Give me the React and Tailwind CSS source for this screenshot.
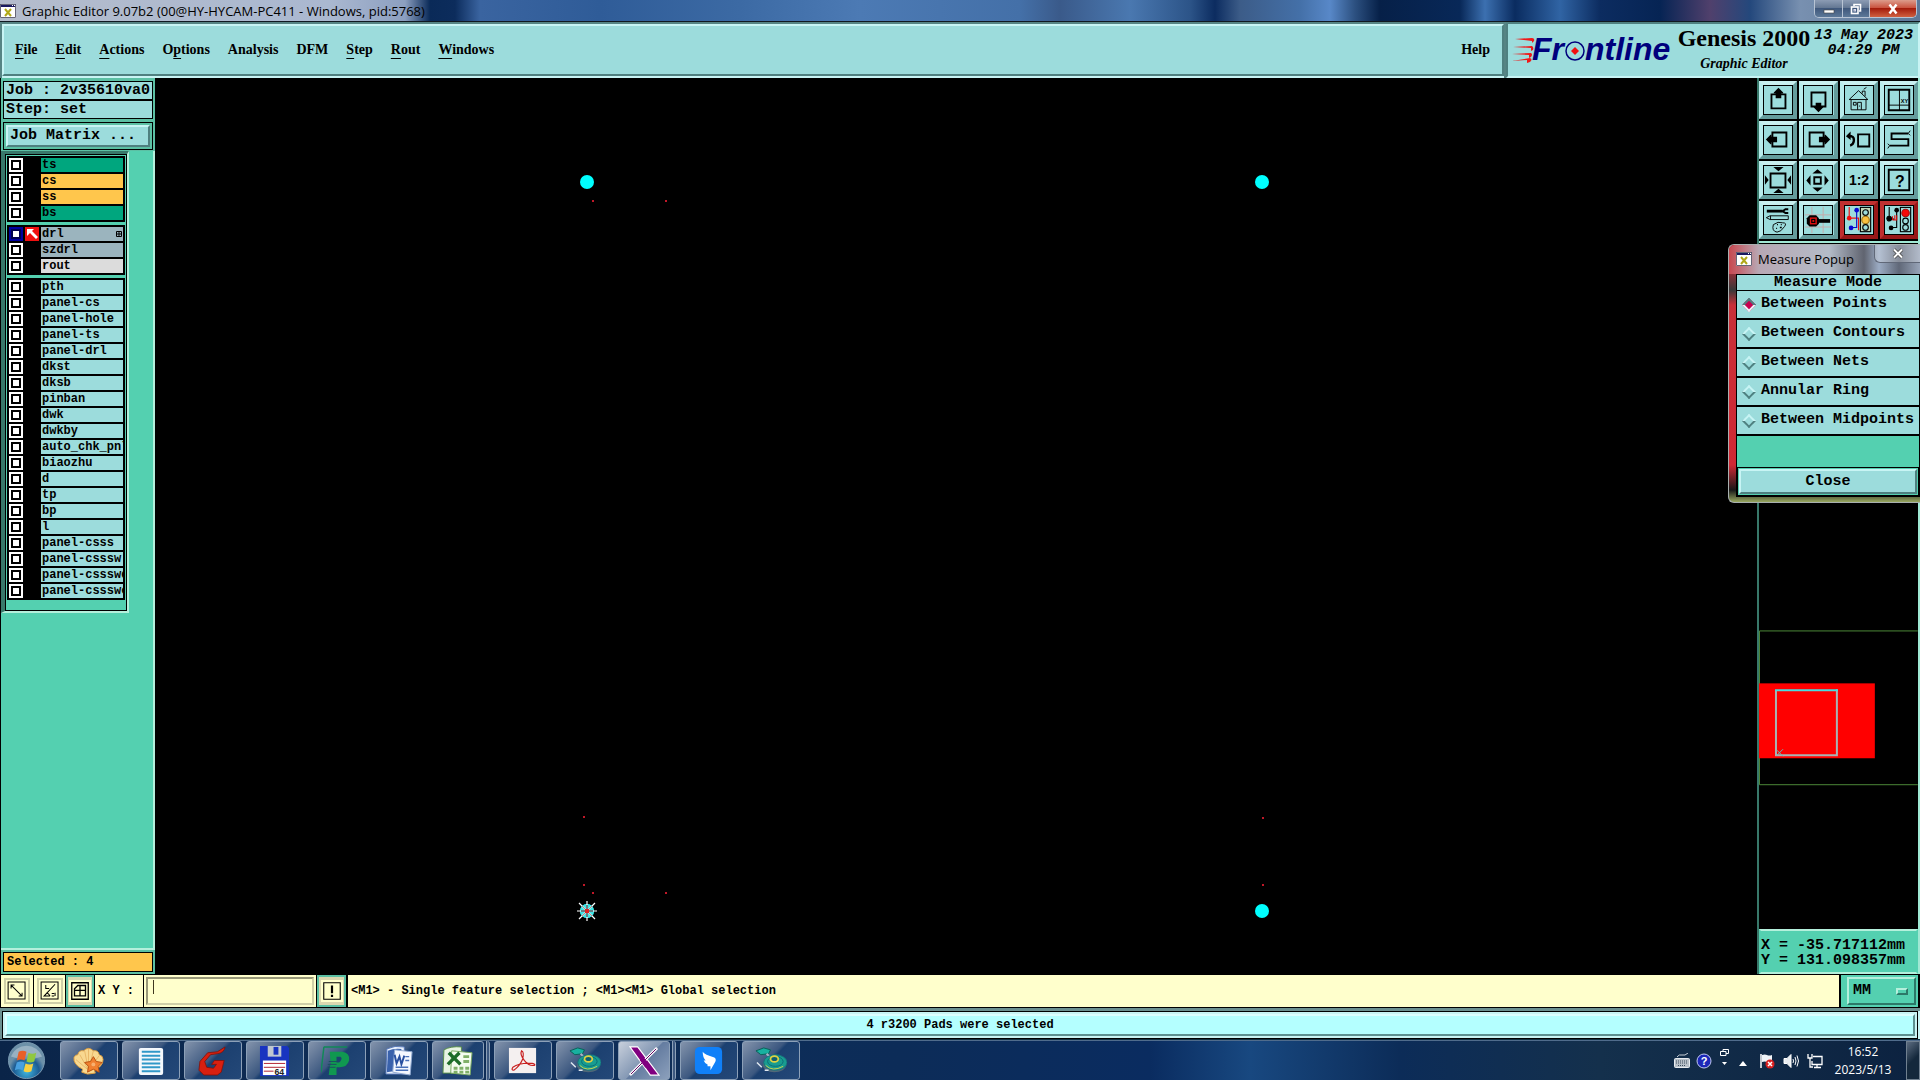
import React from "react";

const MONO = "font-['Liberation_Mono','DejaVu_Sans_Mono',monospace] font-bold";
const SERIF = "font-['Liberation_Serif',serif] font-bold";
const UI = "font-['Open_Sans','Noto_Sans',sans-serif]";
const RAISED = "border-t-[#c8f4f4] border-l-[#c8f4f4] border-b-[#4f8080] border-r-[#4f8080]";

const menus = [
  ["", "F", "ile"],
  ["", "E", "dit"],
  ["", "A", "ctions"],
  ["O", "p", "tions"],
  ["Analysis", "", ""],
  ["DFM", "", ""],
  ["", "S", "tep"],
  ["", "R", "out"],
  ["", "W", "indows"],
];

const layerGroups = [
  [
    { name: "ts", color: "bg-[#00a67e]" },
    { name: "cs", color: "bg-[#ffc64c]" },
    { name: "ss", color: "bg-[#ffc64c]" },
    { name: "bs", color: "bg-[#00a67e]" },
  ],
  [
    { name: "drl", color: "bg-[#9bb4be]", active: true },
    { name: "szdrl", color: "bg-[#9bb4be]" },
    { name: "rout", color: "bg-[#dcdcdc]" },
  ],
  [
    "pth", "panel-cs", "panel-hole", "panel-ts", "panel-drl", "dkst", "dksb", "pinban", "dwk", "dwkby",
    "auto_chk_pnl", "biaozhu", "d", "tp", "bp", "l", "panel-csss", "panel-csssw", "panel-cssswd", "panel-cssswc",
  ].map((name) => ({ name, color: "bg-[#9cdcdc]" })),
];

function AppIcon({ className = "w-4 h-[14px]" }) {
  return (
    <svg viewBox="0 0 16 14" className={className} aria-hidden="true">
      <rect width="16" height="14" fill="#fff" />
      <rect width="16" height="3" fill="#1a1a60" />
      <path d="M12 1h1v1h-1zM14 1h1v1h-1z" fill="#fff" />
      <path d="M.5 .5h15v13H.5z" fill="none" stroke="#667" />
      <path d="M5 5l6 7M11 5l-6 7" stroke="#b0a818" strokeWidth="2" />
    </svg>
  );
}

function TitleBar() {
  return (
    <div className="flex h-[22px] shrink-0 items-start justify-between border-b border-[#101820] bg-[linear-gradient(90deg,#b4bccc_0,#aab8d0_330px,#8c9fc0_405px,#0a2a58_430px,#0c2c5c_455px,#3a64a0_480px,#2f5c98_600px,#3c6aa4_740px,#4c7ab4_860px,#4470a8_1020px,#3a5a8a_1060px,#4a78b0_1130px,#2c5488_1190px,#0c2c60_1215px,#3c5c88_1240px,#4470a8_1300px,#5888c8_1330px,#2c5080_1355px,#062048_1380px,#082858_1460px,#3c70b0_1485px,#0a2c60_1515px,#3064a4_1560px,#0c2c60_1600px,#062454_1660px,#50406c_1710px,#24487c_1750px,#7890b0_1800px,#5c7898_100%)]">
      <div className="flex h-[21px] items-center gap-1.5">
        <AppIcon />
        <h1 className={`${UI} text-[13px] leading-[20px] text-black`}>Graphic Editor 9.07b2 (00@HY-HYCAM-PC411 - Windows, pid:5768)</h1>
      </div>
      <div className="mr-[3px] flex h-[18px] overflow-hidden rounded-b-[5px] border border-t-0 border-[#b8c4d4]">
        <button aria-label="Minimize" className="flex w-7 items-center justify-center border-r border-[#b8c4d4] bg-[linear-gradient(#8c9cb4,#607490_50%,#40587c_50%,#5c7898)]">
          <svg viewBox="0 0 12 12" className="h-3 w-3"><rect x="1" y="7" width="10" height="3" fill="#fff" stroke="#444" strokeWidth=".6" /></svg>
        </button>
        <button aria-label="Restore" className="flex w-[27px] items-center justify-center border-r border-[#b8c4d4] bg-[linear-gradient(#8c9cb4,#607490_50%,#40587c_50%,#5c7898)]">
          <svg viewBox="0 0 12 12" className="h-3 w-3" fill="none" stroke="#fff" strokeWidth="1.6"><path d="M4 3V1.5h6.500V8H9" /><rect x="1.500" y="4" width="6.500" height="6.500" /><rect x="4" y="6.500" width="1.500" height="1.500" strokeWidth="1" stroke="#dde" /></svg>
        </button>
        <button aria-label="Close window" className="flex w-[46px] items-center justify-center bg-[linear-gradient(#dc9c8c,#c84c38_50%,#a41c0c_50%,#d06040)]">
          <svg viewBox="0 0 12 12" className="h-3 w-3" stroke="#fff" strokeWidth="2.500"><path d="M2.500 1.500l7 9M9.500 1.500l-7 9" /></svg>
        </button>
      </div>
    </div>
  );
}

function FrontlineLogo() {
  return (
    <svg viewBox="0 -6 162 42" className="h-[42px] w-[162px] shrink-0" role="img" aria-label="Frontline">
      <g fill="#f01818">
        <path d="M3 4l17-1q3 0 2 3l-2 2v-2zM1 12l19-1q2 1 1 4l-2 1v-3zM0 19l19-1q2 1 0 4l-2 1v-3zM0 26l18-3q3 1 0 4l-3 1v-3z" />
      </g>
      <g fill="#00007c" fontFamily="'Liberation Sans',sans-serif" fontWeight="700" fontStyle="italic" fontSize="32">
        <text x="20" y="25">Fr</text>
        <text x="73" y="25">ntline</text>
      </g>
      <circle cx="63" cy="16" r="9" fill="#9cdcdc" stroke="#00007c" strokeWidth="1.500" />
      <path d="M63 12l4 4-4 4-4-4z" fill="#f01010" />
    </svg>
  );
}

function MenuBar() {
  return (
    <header className="flex h-14 shrink-0 bg-[#568484] text-black">
      <div className="flex flex-1 flex-col pl-0.5 pt-0.5">
        <nav className={`${SERIF} flex flex-1 items-center border-2 ${RAISED} bg-[#9cdcdc] pl-[11px] pr-3 text-[14px] leading-[18px]`}>
          <div className="flex flex-1 gap-[18px]">
            {menus.map(([a, u, b]) => (
              <button key={a + u + b}>
                {a}
                {u && <span className="underline underline-offset-4">{u}</span>}
                {b}
              </button>
            ))}
          </div>
          <button>Help</button>
        </nav>
        <div className="h-0.5 bg-[#c8f4f4]" />
      </div>
      <div className="ml-0.5 flex w-[414px] items-start border-2 border-t-[#4f8080] border-l-[#4f8080] border-b-[#c8f4f4] border-r-[#c8f4f4] bg-[#9cdcdc]">
        <div className="pl-1 pt-[5px]"><FrontlineLogo /></div>
        <div className={`${SERIF} flex w-[140px] shrink-0 flex-col items-center whitespace-nowrap`}>
          <div className="text-[24px] leading-[29px]">Genesis 2000</div>
          <div className="text-[14px] italic leading-[22px]">Graphic Editor</div>
        </div>
        <time className={`${MONO} whitespace-nowrap pt-1 text-center text-[15px] italic leading-[15px]`}>
          13 May 2023
          <br />
          04:29 PM
        </time>
      </div>
    </header>
  );
}

function Layer({ name, color, active }) {
  return (
    <li className="flex h-4 items-center gap-0.5 px-0.5">
      <label className={`flex size-[14px] shrink-0 items-center justify-center ${active ? "bg-[#0000a0]" : "bg-white"}`}>
        <input
          type="checkbox"
          aria-label={`Display ${name}`}
          className={`size-[10px] appearance-none border-2 bg-white ${active ? "border-[#000050]" : "border-black"}`}
        />
      </label>
      <span className="size-[14px] shrink-0">
        {active && (
          <svg viewBox="0 0 14 14" className="size-[14px] bg-[#f01010]"><path d="M2 2h7L7 4l6 6-2 2-6-6-3 3z" fill="#fff" /></svg>
        )}
      </span>
      <button className={`${MONO} ${color} flex h-[14px] min-w-0 flex-1 items-center justify-between overflow-hidden pl-px text-left text-[12px] leading-[14px] whitespace-nowrap text-black`}>
        {name}
        {active && (
          <svg viewBox="0 0 6 6" className="mr-px size-1.5" fill="none" stroke="#000"><path d="M.5 .5h5v5h-5zM3 0v6M0 3h6" /></svg>
        )}
      </button>
    </li>
  );
}

function Sidebar() {
  return (
    <aside className="ml-px flex w-[154px] shrink-0 flex-col bg-[#5cc0a4] pt-[3px] text-black">
      <div className={`${MONO} mx-0.5 text-[15px] leading-[17px]`}>
        <div className="border border-black bg-[#9cdcdc] pl-0.5">Job : 2v35610va0</div>
        <div className="border border-black bg-[#9cdcdc] pl-0.5">Step: set</div>
        <div className="mt-[3px] border border-black p-0.5">
          <button className={`h-[22px] w-full border-2 ${RAISED} bg-[#9cdcdc] pl-0.5 text-left leading-[18px]`}>Job Matrix ...</button>
        </div>
      </div>
      <div className="mt-px flex flex-1 items-start border-r-2 border-b-2 border-r-[#b4f0dc] border-b-[#b4f0dc] bg-[#54d0b0]">
        <div className="border-t-[3px] border-l-4 border-r-2 border-b-2 border-t-[#38786a] border-l-[#38786a] border-r-[#b4f0dc] border-b-[#b4f0dc]">
          <div className="w-[122px] space-y-[3px] border border-black px-px pt-px pb-[10px]">
            {layerGroups.map((g, i) => (
              <ul key={i} className="bg-black py-px">
                {g.map((l) => (
                  <Layer key={l.name} {...l} />
                ))}
              </ul>
            ))}
          </div>
        </div>
      </div>
      <div className={`${MONO} mx-0.5 mt-0.5 mb-0.5 border border-black bg-[#ffc64c] pl-[3px] text-[12px] leading-[18px]`}>Selected : 4</div>
    </aside>
  );
}

const pads = [[432, 104], [1107, 104], [1107, 833], [432, 833]];
const marks = [[437, 122], [510, 122], [428, 738], [1107, 739], [428, 806], [437, 814], [510, 814], [1107, 806]];

function Canvas() {
  return (
    <main className="min-w-0 flex-1 bg-black">
      <svg viewBox="0 0 1602 896" className="h-full w-full" role="img" aria-label="Board view">
        {pads.map(([x, y]) => <circle key={`${x}-${y}`} cx={x} cy={y} r="7" fill="#00ffff" />)}
        {marks.map(([x, y]) => <rect key={`${x}-${y}`} x={x} y={y} width="2" height="2" fill="#c01828" />)}
        <g transform="translate(432 833)">
          <circle r="7" fill="#40e4e4" />
          <path d="M-10 0H10M0-10V10M-8-8L8 8M-8 8L8-8" stroke="#fff" strokeWidth="1.200" />
          <path d="M-6 0H6M0-6V6" stroke="#505860" strokeWidth="1.500" />
          <path d="M-5-5L5 5M-5 5L5-5" stroke="#d08080" />
          <rect x="-2" y="-2" width="4" height="4" fill="#e02020" />
        </g>
      </svg>
    </main>
  );
}

const glyph = { fontFamily: "'Liberation Sans',sans-serif", fontWeight: 700, fill: "#000", stroke: "none" };

const tools = [
  ["Pan up", <g key="i"><path d="M8 9h15v15H8z" /><path d="M15.500 2l5 5v1h-2v5h-6V8h-2V7z" fill="#000" strokeWidth="0" /></g>],
  ["Pan down", <g key="i"><path d="M8 7h15v15H8z" /><path d="M15.500 28l5-5v-1h-2v-4h-6v4h-2v1z" fill="#000" strokeWidth="0" /></g>],
  ["Home", <g key="i" strokeWidth="1"><path d="M4.500 14.500L14.500 5l10 9.500zM6.500 14.500v11h16v-11M13.500 25.500v-8h4v8M9 17.500h3v3H9zM18.500 8V5.500h3V11M20 3.500l3-2M15.500 21v1" /></g>],
  ["Snap view", <g key="i"><path d="M4 4h22v22H4z" /><path d="M15.500 4v22M4 20.500h22" strokeWidth="1" /><text x="17" y="18" {...glyph} fontSize="6">XY</text></g>],
  ["Pan left", <g key="i"><path d="M9 7h15v15H9z" /><path d="M2 14.500l5-5h1v2h6v6H8v2H7z" fill="#000" strokeWidth="0" /></g>],
  ["Pan right", <g key="i"><path d="M6 7h15v15H6z" /><path d="M28 14.500l-5-5h-1v2h-6v6h6v2h1z" fill="#000" strokeWidth="0" /></g>],
  ["Previous view", <g key="i"><path d="M14 9h12v13H14z" /><path d="M4 11h3q3 1 2.500 5t-4 5" strokeWidth="2.500" /><path d="M1 11l5-5v9z" fill="#000" strokeWidth="0" /></g>],
  ["Serpentine", <g key="i"><path d="M25 8H7v6h18v7H5" /><path d="M25 8l2-3M25 8l2 2M5 21l-2-2M5 21l-2 3" strokeWidth="1" /></g>],
  ["Zoom in", <g key="i"><path d="M7 8h16v15H7z" /><path d="M10 1h11l-5.500 4.500zM10 29h11l-5.500-4.500zM1 10v10l4-5zM29 10v10l-4-5z" fill="#000" strokeWidth="0" /></g>],
  ["Zoom out", <g key="i"><path d="M11 12h7v7h-7z" /><path d="M9 8h11l-5.500-4.500zM9 23h11l-5.500 4.500zM7 10v11l-4.500-5.500zM22 10v11l4.500-5.500z" fill="#000" strokeWidth="0" /></g>],
  ["Scale one to two", <text key="i" x="15" y="20" {...glyph} fontSize="15" textAnchor="middle">1:2</text>],
  ["Query", <g key="i"><path d="M4 4h22v22H4z" /><text x="16" y="22" {...glyph} fontSize="17" textAnchor="middle">?</text></g>],
  ["Options", <g key="i" strokeWidth="1"><path d="M3 5.500h17" strokeWidth="3" /><path d="M26 3.500h-3l-3 2 3 2h3" strokeWidth="2" /><path d="M2.500 12.500l4-2H26v4H6.500zM7 10.500v4" /><path d="M10 20q5-4 10-2 5 0 2 4-4 6-8 6-6-1-4-8z" /><path d="M14 20h1M18 20h1M13 24h1M17 23h2" strokeWidth="1.500" /></g>],
  ["Control", <g key="i"><path d="M8.500 1v28M20.500 1v28M1 9.500h28M1 22.500h28" stroke="#c8a8a8" strokeWidth="1" /><path d="M13 16h15" strokeWidth="4" /><path d="M6 10h7l3 3v6l-3 3H6l-3-3v-6z" fill="#000" strokeWidth="0" /><rect x="7" y="13" width="6" height="6" stroke="#e01010" strokeWidth="1.500" /><rect x="9" y="15" width="2" height="2" fill="#e01010" stroke="none" /></g>],
  ["Highlight nets", <g key="i" strokeWidth="1.200"><path d="M4.500 1v12h10v13" stroke="#f01010" /><path d="M12.500 4v19H6" stroke="#0808d0" /><circle cx="4.500" cy="13" r="2.500" fill="#f01010" stroke="none" /><circle cx="12.500" cy="4.500" r="2.500" fill="#0808d0" stroke="none" /><circle cx="6.500" cy="23.500" r="2.500" fill="#0808d0" stroke="none" /><rect x="16.500" y="1.500" width="11" height="26" fill="#c4d8b8" /><circle cx="22" cy="7" r="3" fill="#9cdcdc" /><circle cx="22" cy="15" r="4" fill="#f8c040" stroke="#a07010" /><circle cx="22" cy="23" r="3" fill="#9cdcdc" /></g>, true],
  ["Stop nets", <g key="i" strokeWidth="1.200"><path d="M4.500 1v12M12.500 4v19H6M4 14h6" /><path d="M8 11v4M10.500 10v5M8 15h5M12.500 10v5" stroke="#e01010" /><circle cx="4.500" cy="13.500" r="2.500" fill="#000" /><circle cx="12.500" cy="4.500" r="2.500" fill="#000" stroke="none" /><circle cx="6.500" cy="23.500" r="2.500" fill="#000" stroke="none" /><rect x="16.500" y="1.500" width="11" height="26" fill="#9cdcdc" /><circle cx="22" cy="7.500" r="4" fill="#f80808" stroke="#a01010" /><circle cx="22" cy="16" r="3" /><circle cx="22" cy="23" r="3" /></g>, true],
];

function RightPanel() {
  return (
    <aside className="flex w-[163px] shrink-0 flex-col border-l-2 border-r-2 border-l-[#38786a] border-r-[#a0e8d4] bg-black">
      <div className="grid grid-cols-4 gap-0.5 border-b-2 border-[#a0e8d4] pt-[3px] pb-0.5">
        {tools.map(([label, art, red]) => (
          <button
            key={label}
            aria-label={label}
            className={`flex h-[38px] items-center justify-center border-4 ${red ? "border-[#c03030] border-r-[#981818] border-b-[#981818]" : "border-t-[#c8f0f0] border-l-[#b8ecec] border-b-[#649c9c] border-r-[#649c9c]"} bg-[#9cdcdc]`}
          >
            <svg viewBox="0 0 30 30" className="size-[30px] border border-black" fill="none" stroke="#000" strokeWidth="2">{art}</svg>
          </button>
        ))}
      </div>
      <div className="min-h-0 flex-1">
        <svg viewBox="0 0 159 687" preserveAspectRatio="xMinYMin meet" className="h-full w-full" role="img" aria-label="Overview">
          <path d="M159 388.500H.5v154H159" fill="none" stroke="#4c8838" />
          <rect x="0" y="441" width="116" height="75" fill="#f00" />
          <path d="M17 448v65h61v-66" fill="none" stroke="#a8b4b4" strokeWidth="2" />
          <path d="M16 448h63" stroke="#48dce0" strokeWidth="2" />
          <path d="M18 508l6 6M24 507l-6 6" stroke="#60c0c0" />
        </svg>
      </div>
      <div className={`${MONO} border-2 border-t-[#b4f0dc] border-b-[#b4f0dc] border-l-[#54d0b0] border-r-[#54d0b0] bg-[#54d0b0] pt-[7px] pb-1 text-[15px] leading-[15px] whitespace-pre text-black`}>
        <div>X = -35.717112mm</div>
        <div>Y = 131.098357mm</div>
      </div>
    </aside>
  );
}

const modes = ["Between Points", "Between Contours", "Between Nets", "Annular Ring", "Between Midpoints"];

function MeasurePopup() {
  return (
    <section
      aria-label="Measure Popup"
      className="absolute top-[244px] right-0 w-[192px] rounded-l-md border border-r-0 border-[#a8b0b0] bg-[linear-gradient(#b02838_0,#903038_28px,#383838_45px,#c83038_60px,#d02834_220px,#181818_245px,#98a860_100%)] pb-[5px] pl-[7px] text-black"
    >
      <div className="-ml-[7px] flex h-[29px] items-start justify-between rounded-tl-md bg-[linear-gradient(90deg,#c84850_0,#b8a8b4_30px,#b4bcc8_100px,#606470_135px,#9cacc4_150px,#606878_170px,#98a4b8_100%)] pl-[7px]">
        <div className="flex h-7 items-center gap-1.5">
          <AppIcon />
          <h2 className={`${UI} text-[13px] leading-5`}>Measure Popup</h2>
        </div>
        <button aria-label="Close popup" className="flex h-[18px] w-[46px] items-center justify-center rounded-bl-md border border-t-0 border-r-0 border-[#606878] bg-[#ffffff40]">
          <svg viewBox="0 0 12 12" className="size-3" fill="none"><path d="M2 1.500l8 8M10 1.500l-8 8" stroke="#444" strokeWidth="3.500" /><path d="M2 1.500l8 8M10 1.500l-8 8" stroke="#fff" strokeWidth="2" /></svg>
        </button>
      </div>
      <form className={`${MONO} border border-black bg-[#54d0b0] text-[15px]`}>
        <fieldset className="bg-[#9cdcdc]">
          <legend className="w-full border-b border-black bg-[#9cdcdc] text-center leading-[15px]">Measure Mode</legend>
          {modes.map((m, i) => (
            <label key={m} className="flex h-[29px] items-center gap-[7px] border-b-2 border-black pl-[7px] whitespace-nowrap">
              <input
                type="radio"
                name="mode"
                defaultChecked={i === 0}
                className="size-[10px] shrink-0 rotate-45 appearance-none border-2 border-t-[#c8f4f4] border-l-[#c8f4f4] border-b-[#4f8080] border-r-[#4f8080] checked:border-t-[#4f8080] checked:border-l-[#4f8080] checked:border-b-[#e8f4f8] checked:border-r-[#e8f4f8] checked:bg-[#c80050]"
              />
              {m}
            </label>
          ))}
        </fieldset>
        <div className="mt-[31px] border border-black p-px">
          <button type="button" className={`h-[25px] w-full border-2 ${RAISED} bg-[#9cdcdc] leading-[20px]`}>Close</button>
        </div>
      </form>
    </section>
  );
}

function PromptBar() {
  return (
    <div className={`${MONO} flex h-[34px] shrink-0 gap-px border-t border-b border-black bg-black pl-px text-[12px] text-black`}>
      <button aria-label="Distance" className="flex w-8 items-center justify-center bg-[#ffffcc]">
        <svg viewBox="0 0 26 26" className="size-[26px] border-2 border-[#d0d0a8]" fill="none" stroke="#000"><path d="M2.500 2.500h20v20h-20zM6 6l13 13M6 10V6h4M19 15v4h-4" strokeWidth="1.200" /></svg>
      </button>
      <button aria-label="Angle" className="flex w-[31px] items-center justify-center bg-[#ffffcc]">
        <svg viewBox="0 0 26 26" className="size-[26px] border-2 border-[#d0d0a8]" fill="none" stroke="#000"><path d="M2.500 2.500h20v20h-20zM19 5L6 19h7M8 6v4h4M15 16h3M19 15v4M15 19h3M9 15q3 1 4 4" strokeWidth="1.200" /></svg>
      </button>
      <button aria-label="Grid" className="flex w-[28px] items-center justify-center border-2 border-[#5cc0a4] bg-[#dcd8b0]">
        <svg viewBox="0 0 20 20" className="size-[22px] bg-[#ffffcc]" fill="none" stroke="#000"><path d="M2.500 2.500h15v15h-15zM5 14.500V8l3-3h7v9.500zM10 5v9.500M5 9.500h10" strokeWidth="1.200" /></svg>
      </button>
      <label htmlFor="xy" className="flex w-12 items-center bg-[#ffffcc] pl-[3px] whitespace-pre">X Y :</label>
      <div className="flex w-[172px] bg-[#ffffcc] p-0.5">
        <input id="xy" type="text" className="w-full border-2 border-t-[#989878] border-l-[#989878] border-b-[#d0d0a8] border-r-[#d0d0a8] bg-[#ffffcc] bg-[linear-gradient(#403820,#403820)] bg-size-[1px_14px] bg-position-[5px_1px] bg-no-repeat px-1 outline-none" />
      </div>
      <button aria-label="Prompt" className="flex w-[29px] items-center justify-center border-2 border-[#5cc0a4] bg-[#dcd8b0]">
        <svg viewBox="0 0 20 20" className="size-[22px] bg-[#ffffcc]" fill="none" stroke="#000"><path d="M2.500 2.500h15v15h-15z" /><path d="M10 5v7M10 13.500v2" strokeWidth="2" /></svg>
      </button>
      <div className="ml-px flex flex-1 items-center bg-[#ffffcc] pl-[3px] whitespace-pre">&lt;M1&gt; - Single feature selection ; &lt;M1&gt;&lt;M1&gt; Global selection</div>
      <div className="mr-0.5 ml-px w-[77px] bg-[#54d0b0] py-0.5 pr-0.5 pl-1.5">
        <button className="flex h-7 w-full items-center justify-between border-2 border-t-[#b4f0dc] border-l-[#b4f0dc] border-b-[#2c7868] border-r-[#2c7868] pt-px pr-1.5 pl-1 text-[15px]">
          MM
          <span className="h-[7px] w-3 border-2 border-t-[#b4f0dc] border-l-[#b4f0dc] border-b-[#2c7868] border-r-[#2c7868]" />
        </button>
      </div>
    </div>
  );
}

function StatusBar() {
  return (
    <div className="shrink-0 border-b border-[#103040] bg-[#c8f4f4]">
      <div className="border-t-[3px] border-l-2 border-[#6c9090] pr-0.5">
        <div className="border border-black bg-[#c8f4f4] p-0.5">
          <output className={`${MONO} block border-2 border-t-[#dcffff] border-l-[#dcffff] border-b-[#5c9090] border-r-[#5c9090] bg-[#b4ffff] text-center text-[12px] leading-[18px] text-black`}>4 r3200 Pads were selected</output>
        </div>
      </div>
    </div>
  );
}

function Disk() {
  return (
    <g>
      <path d="M1 6l8-3 7 2-2 4-8 1z" fill="#18b0a0" stroke="#0a6058" />
      <path d="M12 9l5 5" stroke="#aab4c8" strokeWidth="2" />
      <ellipse cx="20" cy="21" rx="12" ry="7" fill="#506878" />
      <ellipse cx="21" cy="18" rx="12" ry="8" fill="#189c90" stroke="#18707c" />
      <path d="M11 21q7 7 18 1" stroke="#c8d050" />
      <ellipse cx="21" cy="17" rx="8" ry="5" fill="none" stroke="#0a6c78" />
      <ellipse cx="20" cy="14.500" rx="4" ry="3" fill="#106070" stroke="#e0d040" strokeWidth="1.800" />
      <path d="M2 18l5 5M10 26h4" stroke="#e0e8f0" strokeWidth="1.500" />
    </g>
  );
}

const apps = [
  ["Shell viewer", <g key="i"><path d="M15 30l-6-2 1-3Q0 20 1 13q1-3 4-3 1-5 6-4 5-5 10 0 5-1 6 4 4 1 4 5 0 7-9 11l1 3z" fill="#f8d890" stroke="#e0a040" /><path d="M16 26L7 10M16 26L12 6M16 26V4M16 26l5-20M16 26L27 11M16 26L3 15" stroke="#e8b868" /><path d="M21 12l3 5 6 1-4 4 1 6-6-3-6 3 1-6-4-4 6-1z" fill="#f08030" stroke="#b85010" /><circle cx="21" cy="20" r="2" fill="#f8b070" /></g>],
  ["Notepad", <g key="i"><rect x="4" y="3" width="25" height="28" rx="2" fill="#f4f8fc" /><path d="M7 7h19M7 11h19M7 15h19M7 19h19M7 23h19M7 27h19" stroke="#3098c8" strokeWidth="2" /></g>],
  ["Genesis", <path key="i" d="M29 2q-1 6-8 7l-7 1-6 7 2 6 7 1 3-4h-5l3-4h10l-3 12-4 3H7l-5-5 1-9 8-9 10-1z" fill="#d82010" stroke="#801008" strokeWidth=".8" />],
  ["Floppy 64", <g key="i"><path d="M1 1h28l2 2v29H1z" fill="#1834c0" /><rect x="9" y="1" width="14" height="11" fill="#c0c8d0" /><rect x="15" y="2" width="5" height="8" fill="#1834c0" /><rect x="4" y="16" width="24" height="15" fill="#fff" /><path d="M5 19h22M5 23h22M5 27h10" stroke="#b02030" /><text x="16" y="31" fontSize="9" fontFamily="'Liberation Sans',sans-serif" fontWeight="700" fill="#222">64</text></g>],
  ["P client", <g key="i"><path d="M3 2h24M3 2L0 28" stroke="#108858" strokeWidth="1.500" /><path d="M9 7h13q8 1 7 9-2 7-10 7h-3v8H8l1-8 1-4z" fill="#109850" /><path d="M16 12h4q2 1 1 3-1 3-3 3h-2z" fill="#1c4470" /><path d="M8 17h9M7 20h9M7 23h8" stroke="#1c5060" /></g>],
  ["Word", <g key="i"><path d="M4 4q8-4 18-2v28H3z" fill="#e8f0fc" stroke="#5878b8" /><path d="M5 6q6-3 14-2l-2 22-13 2z" fill="#3a62ac" /><path d="M12 5l18 2-2 24-18-3z" fill="#f4f8ff" stroke="#90a8d0" /><path d="M12 10l2 9 3-7 2 8 3-9" fill="none" stroke="#2850a0" strokeWidth="2" /><path d="M23 12h4M23 16h4M13 23h13M13 26h13" stroke="#4870b8" strokeWidth="1.500" /></g>],
  ["Excel", <g key="i"><path d="M2 5q7-4 18-3v27H1z" fill="#e8f4e4" stroke="#589048" /><path d="M10 6l21 2-2 23-20-2z" fill="#f4fcf0" stroke="#78a860" /><path d="M22 12h6M22 17h6M12 24h4M18 24h4M24 24h4M12 28h4M18 28h4M24 28h4" stroke="#80b068" strokeWidth="3" /><path d="M7 8l12 12M18 8L6 20" stroke="#1c6c28" strokeWidth="3.500" /></g>, "stack"],
  ["Acrobat", <g key="i"><rect x="2" y="3" width="28" height="26" fill="#f4f0f0" /><path d="M15 6q3 1 1 9-3 7-9 11-3 0-1-3 7-5 20-4 4 1 2 2-5 1-10-5-5-6-3-10z" fill="none" stroke="#c82020" strokeWidth="1.200" /></g>],
  ["Disk utility", <Disk key="i" />],
  ["X server", <g key="i"><path d="M2 2h8l22 29h-9z" fill="#800080" stroke="#fff" strokeWidth="1.200" /><path d="M30 3L2 31" stroke="#fff" strokeWidth="3" /><path d="M29 4L3 30" stroke="#600060" /><path d="M14 14l6 8" stroke="#800080" strokeWidth="5" /></g>, "active"],
  ["Wing messenger", <g key="i"><rect x="2" y="2" width="28" height="28" rx="5" fill="#1080f8" /><path d="M10 7q2 3 12 6 3 2 0 6l-4 7v-4h-3v-2q-3-1-4-4h2q-3-3-3-9z" fill="#fff" /></g>],
  ["Disk utility copy", <Disk key="i" />],
];

function Taskbar() {
  return (
    <footer className="flex h-10 shrink-0 border-t border-[#506c8c] bg-[linear-gradient(90deg,#0a2448_0,#102e58_400px,#0c2c58_900px,#0a2c60_1150px,#184880_1250px,#0c2c58_1400px,#14304c_1600px,#0c2240_100%)] text-white">
      <button aria-label="Start" className="ml-[7px] mr-[14px] w-[39px]">
        <svg viewBox="0 0 40 40" className="size-[39px]">
          <defs>
            <radialGradient id="orb" cx="50%" cy="80%"><stop offset="0" stopColor="#40b8e0" /><stop offset=".7" stopColor="#1c5c94" /><stop offset="1" stopColor="#6c90a8" /></radialGradient>
          </defs>
          <circle cx="20" cy="20" r="18.500" fill="url(#orb)" stroke="#7898b0" />
          <path d="M4 16a17 17 0 0 1 32 0q-16 6-32 0" fill="#fff" opacity=".3" />
          <path d="M12 11q4-2 8 0l-2 9q-4-2-8 0z" fill="#e86028" />
          <path d="M22 12q4 2 8 0l-2 9q-4 2-8 0z" fill="#90c840" />
          <path d="M10 22q4-2 8 0l-2 8q-4-2-8 0z" fill="#48a0e0" />
          <path d="M19 23q4 2 8 0l-2 8q-4 2-8 0z" fill="#f8d040" />
        </svg>
      </button>
      <div className="flex gap-1">
        {apps.map(([label, art, kind]) => (
          <div key={label} className="flex w-[58px] gap-0.5">
            <button
              aria-label={label}
              className={`flex min-w-0 flex-1 items-center justify-center rounded-[3px] border border-[#8ca0b8] ${kind === "active" ? "bg-[linear-gradient(135deg,#c8d0dc,#8498b4_50%,#647ca0_51%,#8ca0bc)]" : "bg-[linear-gradient(135deg,#8494ac,#3c5880_45%,#1c4070_50%,#244878)]"}`}
            >
              <svg viewBox="0 0 33 33" className="size-8" fill="none">{art}</svg>
            </button>
            {kind && <span className="w-1 rounded-r-[3px] border-x border-[#8ca0b8] bg-[#3c5880]" />}
          </div>
        ))}
      </div>
      <div className="ml-auto flex items-center gap-2">
        <button aria-label="Keyboard">
          <svg viewBox="0 0 16 16" className="size-4" fill="none"><path d="M3 4q2-3 5-2t6-2" stroke="#c8d0d8" /><rect x=".5" y="5.500" width="15" height="9" rx="1" fill="#b8c0c8" stroke="#e8ecf0" /><path d="M2 8h12M2 10h12M4 12.500h8" stroke="#3c4c5c" strokeDasharray="1 1" /></svg>
        </button>
        <button aria-label="Help" className="-ml-0.5">
          <svg viewBox="0 0 16 16" className="size-4"><circle cx="8" cy="8" r="7" fill="#1c28b8" stroke="#c0c8f0" /><text x="8" y="12" fontSize="11" fontWeight="700" textAnchor="middle" fill="#fff" fontFamily="'Liberation Sans',sans-serif">?</text></svg>
        </button>
        <button aria-label="Language options" className="self-start pt-2">
          <svg viewBox="0 0 9 18" className="h-[18px] w-[9px]" fill="none" stroke="#fff"><path d="M3 2.500V.5h5.500v4H6M.5 2.500H6v4H.5z" /><path d="M2 13h5l-2.500 3z" fill="#fff" stroke="none" /></svg>
        </button>
        <button aria-label="Show hidden icons" className="ml-0.5 pt-1.5">
          <svg viewBox="0 0 8 5" className="h-[5px] w-2"><path d="M0 5l4-5 4 5z" fill="#fff" /></svg>
        </button>
        <button aria-label="Action center" className="ml-1">
          <svg viewBox="0 0 16 16" className="size-4"><path d="M2 1v14" stroke="#fff" strokeWidth="1.500" /><path d="M3 2q3-1 5 0t5 0v7q-3 1-5 0t-5 0z" fill="#f0f4f8" /><circle cx="11" cy="11" r="4.500" fill="#d82020" /><path d="M9 9l4 4M13 9l-4 4" stroke="#fff" strokeWidth="1.500" /></svg>
        </button>
        <button aria-label="Volume">
          <svg viewBox="0 0 16 16" className="size-4" fill="none" stroke="#fff"><path d="M1 5.500h3l4-4v13l-4-4H1z" fill="#e8ecf0" /><path d="M10 6q1 2 0 4M12 4q2 4 0 8M14 2.500q3 5.500 0 11" /></svg>
        </button>
        <button aria-label="Network">
          <svg viewBox="0 0 16 16" className="size-4" fill="none" stroke="#fff" strokeWidth="1.300"><path d="M6 3.500h9v8H5V8M7 14.500h7M10 12v2M1 1v4h4V1M3 5v9h3" /></svg>
        </button>
        <time className={`${UI} mr-[3px] w-16 text-center text-[12px] leading-[18px]`}>
          16:52
          <br />
          2023/5/13
        </time>
        <button aria-label="Show desktop" className="h-full w-[14px] border border-[#708090] bg-[linear-gradient(135deg,#5c6c80,#14283c_50%)]" />
      </div>
    </footer>
  );
}

export default function App() {
  return (
    <div className="relative flex h-screen flex-col overflow-hidden bg-black">
      <TitleBar />
      <MenuBar />
      <div className="flex min-h-0 flex-1">
        <Sidebar />
        <Canvas />
        <RightPanel />
      </div>
      <PromptBar />
      <StatusBar />
      <Taskbar />
      <MeasurePopup />
    </div>
  );
}
